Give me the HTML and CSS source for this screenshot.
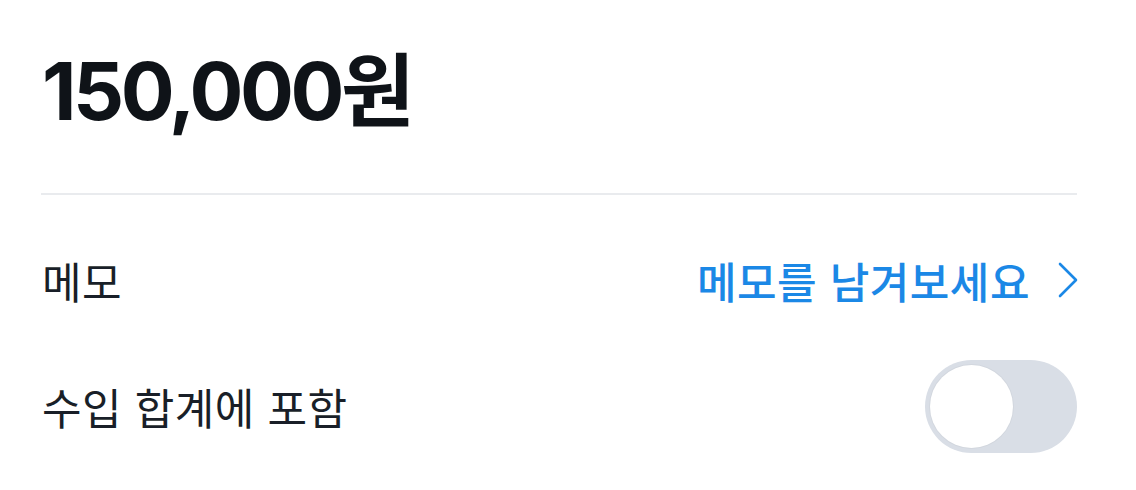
FILE: index.html
```html
<!DOCTYPE html>
<html lang="ko">
<head>
    <meta charset="UTF-8">
    <meta name="viewport" content="width=device-width, initial-scale=1.0">
    <title>수입 상세</title>
    <link rel="stylesheet" href="styles.css">
</head>
<body>
    <div class="detail">
        <h1 class="amount">150,000원</h1>
        <hr class="divider">
        <div class="row">
            <span class="label">메모</span>
            <button class="memo-link">
                메모를 남겨보세요
                <svg class="chevron" width="22" height="38" viewBox="0 0 22 38">
                    <polyline points="3,3 19,19 3,35" fill="none" stroke="currentColor" stroke-width="2.6" stroke-linecap="round" stroke-linejoin="round"/>
                </svg>
            </button>
        </div>
        <div class="row">
            <span class="label">수입 합계에 포함</span>
            <label class="toggle">
                <input type="checkbox">
                <span class="knob"></span>
            </label>
        </div>
    </div>
</body>
</html>
```

FILE: styles.css
```css
body { margin: 0; background: #fff; font-family: "Noto Sans CJK KR", "Noto Sans", sans-serif; color: #191f28; }
.detail { padding: 51px 59px 0 41px; }
.amount { margin: 0 0 0 1px; font-family: Inter, "Noto Sans CJK KR", sans-serif; font-size: 80px; line-height: 80px; font-weight: 700; color: #0f1318; letter-spacing: -3.5px; }
.divider { margin: 62px 0 22px 0; border: none; height: 2px; background: #e9ebee; }
.row { display: flex; justify-content: space-between; align-items: center; height: 126px; }
.label { font-size: 43px; letter-spacing: 0.5px; margin-left: 1px; }
.memo-link { display: flex; align-items: center; gap: 27px; padding: 0; border: none; background: none; font-family: inherit; font-size: 43px; letter-spacing: 0.5px; font-weight: 500; color: #1b88e6; cursor: pointer; }
.chevron { display: block; margin-right: -2px; }
.toggle { display: flex; align-items: center; width: 152px; height: 93px; padding: 5px; box-sizing: border-box; border-radius: 47px; background: #d9dee6; cursor: pointer; }
.toggle input { display: none; }
.knob { width: 83px; height: 83px; border-radius: 50%; background: #fff; box-shadow: 0 0 0 1px rgba(0, 0, 0, 0.03); }
```
